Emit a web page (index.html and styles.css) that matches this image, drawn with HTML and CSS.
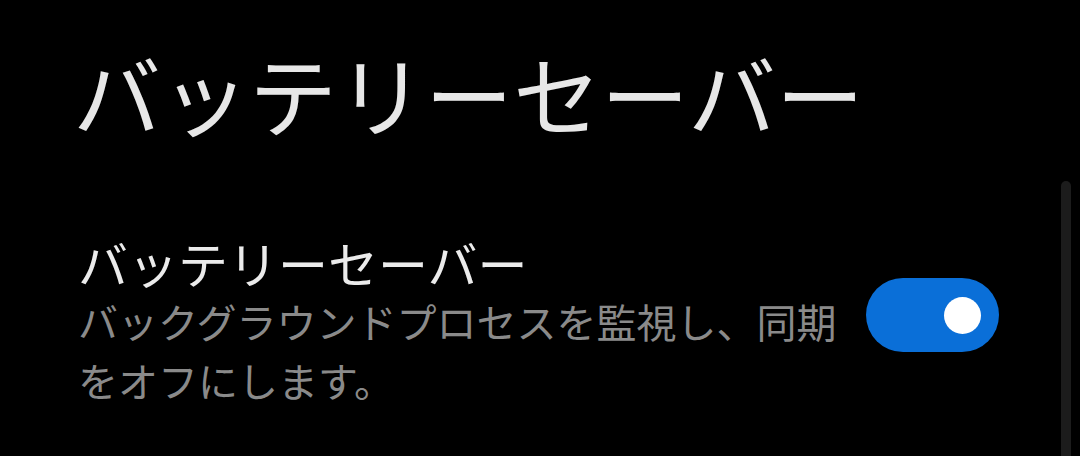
FILE: index.html
```html
<!DOCTYPE html>
<html lang="ja">
  <head>
    <meta charset="UTF-8" />
    <title>バッテリーセーバー</title>
    <link rel="stylesheet" href="styles.css">
  </head>
  <body>
    <div class="screen">
      <h1 class="page-title">バッテリーセーバー</h1>

      <div class="setting-row">
        <div class="setting-text">
          <div class="setting-label">バッテリーセーバー</div>
          <div class="setting-desc">バックグラウンドプロセスを監視し、同期をオフにします。</div>
        </div>
        <div class="switch on">
          <div class="switch-knob"></div>
        </div>
      </div>

      <!-- scroll indicator on the right edge -->
      <div class="scrollbar"></div>
    </div>
  </body>
</html>
```

FILE: styles.css
```css
body, html {
    margin: 0;
    padding: 0;
    height: 100%;
    background-color: #000;
    font-family: "Noto Sans CJK JP", "Noto Sans", sans-serif;
}

.screen {
    position: relative;
    height: 456px;
    overflow: hidden;
    padding: 39px 81px 0 78px;
    box-sizing: border-box;
}

.page-title {
    margin: 0 0 0 -5px;
    font-size: 88px;
    line-height: 106px;
    font-weight: 400;
    color: #e7e7e7;
}

.setting-row {
    display: flex;
    align-items: center;
    margin-top: 87px;
}

.setting-text {
    width: 772px;
}

.setting-label {
    font-size: 50px;
    line-height: 60px;
    color: #ebebeb;
}

.setting-desc {
    font-size: 40px;
    line-height: 59px;
    color: #8a8a8a;
}

.switch {
    margin-left: auto;
    margin-bottom: 12px;
    width: 133px;
    height: 74px;
    border-radius: 37px;
    background-color: #0a6fd8;
    display: flex;
    align-items: center;
    justify-content: flex-end;
    padding-right: 18px;
    box-sizing: border-box;
}

.switch-knob {
    width: 37px;
    height: 37px;
    border-radius: 50%;
    background-color: #fff;
}

.scrollbar {
    position: absolute;
    left: 1061px;
    top: 181px;
    width: 10px;
    height: 300px;
    border-radius: 5px;
    background-color: #1c1c1c;
}
```
